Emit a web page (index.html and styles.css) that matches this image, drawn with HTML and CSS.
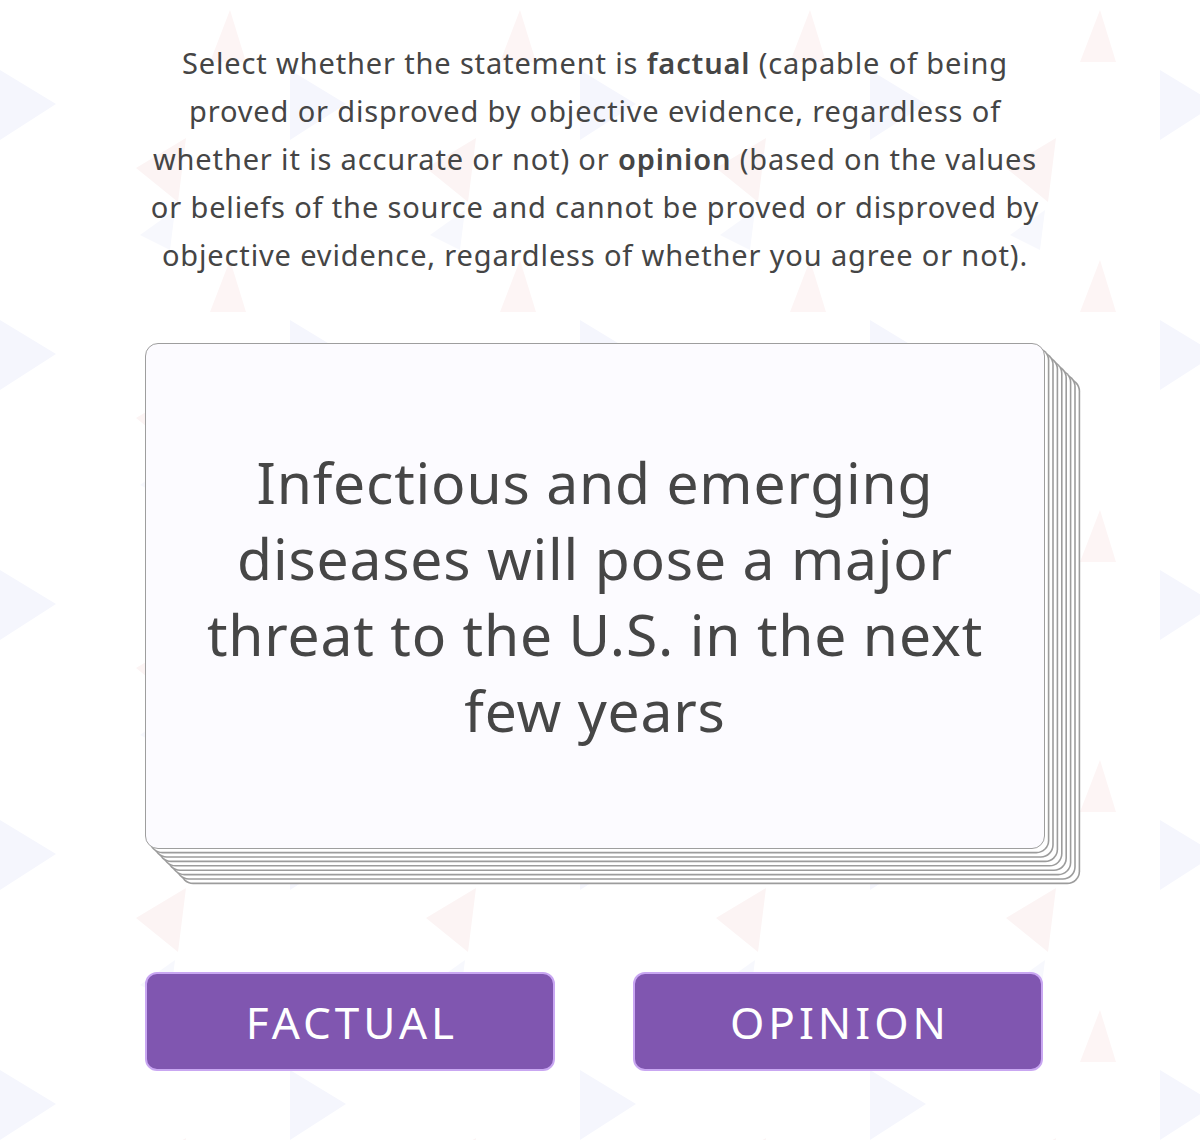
FILE: index.html
```html
<!DOCTYPE html>
<html lang="en">
<head>
<meta charset="utf-8">
<title>Fact or Opinion</title>
<link rel="stylesheet" href="styles.css">
</head>
<body>
<main class="page">
  <p class="intro">Select whether the statement is <b>factual</b> (capable of being<br>proved or disproved by objective evidence, regardless of<br>whether it is accurate or not) or <b>opinion</b> (based on the values<br>or beliefs of the source and cannot be proved or disproved by<br>objective evidence, regardless of whether you agree or not).</p>
  <section class="card">
    <p class="statement">Infectious and emerging<br>diseases will pose a major<br>threat to the U.S. in the next<br>few years</p>
  </section>
  <div class="actions">
    <button class="choice" type="button">FACTUAL</button>
    <button class="choice" type="button">OPINION</button>
  </div>
</main>
</body>
</html>
```

FILE: styles.css
```css
html, body {
  margin: 0;
  padding: 0;
}
body {
  background-color: #ffffff;
  background-image: url("data:image/svg+xml,%3Csvg xmlns='http://www.w3.org/2000/svg' width='290' height='250'%3E%3Cpolygon points='0,70 56,104 0,140' fill='%23f5f6fd'/%3E%3Cpolygon points='186,138 136,168 178,202' fill='%23fcf4f4'/%3E%3Cpolygon points='230,10 246,62 210,62' fill='%23fdf5f5'/%3E%3Cpolygon points='140,235 175,210 170,250' fill='%23f7f8fd'/%3E%3C/svg%3E");
  background-repeat: repeat;
  font-family: "Noto Sans", "Open Sans", sans-serif;
  color: #454545;
}
.page {
  width: 900px;
  margin-left: 145px;
  padding-top: 39px;
  padding-bottom: 69px;
}
.intro {
  margin: 0 -40px;
  font-size: 29px;
  line-height: 48px;
  letter-spacing: 0.85px;
  text-align: center;
  color: #454545;
}
.intro b {
  font-weight: 600;
}
.card {
  margin-top: 64px;
  height: 506px;
  box-sizing: border-box;
  border: 1.5px solid #9e9e9e;
  border-radius: 13px;
  background: #fcfbff;
  display: flex;
  align-items: center;
  justify-content: center;
  box-shadow:
    4.4px 4.4px 0 -1.6px #ffffff, 4.4px 4.4px 0 0 #9c9c9c,
    8.8px 8.8px 0 -1.6px #ffffff, 8.8px 8.8px 0 0 #9c9c9c,
    13.2px 13.2px 0 -1.6px #ffffff, 13.2px 13.2px 0 0 #9c9c9c,
    17.6px 17.6px 0 -1.6px #ffffff, 17.6px 17.6px 0 0 #9c9c9c,
    22px 22px 0 -1.6px #ffffff, 22px 22px 0 0 #9c9c9c,
    26.4px 26.4px 0 -1.6px #ffffff, 26.4px 26.4px 0 0 #9c9c9c,
    30.8px 30.8px 0 -1.6px #ffffff, 30.8px 30.8px 0 0 #9c9c9c,
    35.2px 35.2px 0 -1.6px #ffffff, 35.2px 35.2px 0 0 #9c9c9c;
}
.statement {
  margin: 0;
  font-size: 57px;
  line-height: 76px;
  letter-spacing: 0.8px;
  text-align: center;
  color: #464646;
}
.actions {
  margin-top: 123px;
  display: flex;
  gap: 78px;
  width: 898px;
}
.choice {
  flex: 1;
  height: 99px;
  box-sizing: border-box;
  border: 2px solid #c9a7f2;
  border-radius: 12px;
  background: #8056b0;
  color: #ffffff;
  font-family: "Noto Sans", "Open Sans", sans-serif;
  font-size: 44px;
  letter-spacing: 4px;
  padding: 0 0 0 4px;
  cursor: pointer;
}
```
